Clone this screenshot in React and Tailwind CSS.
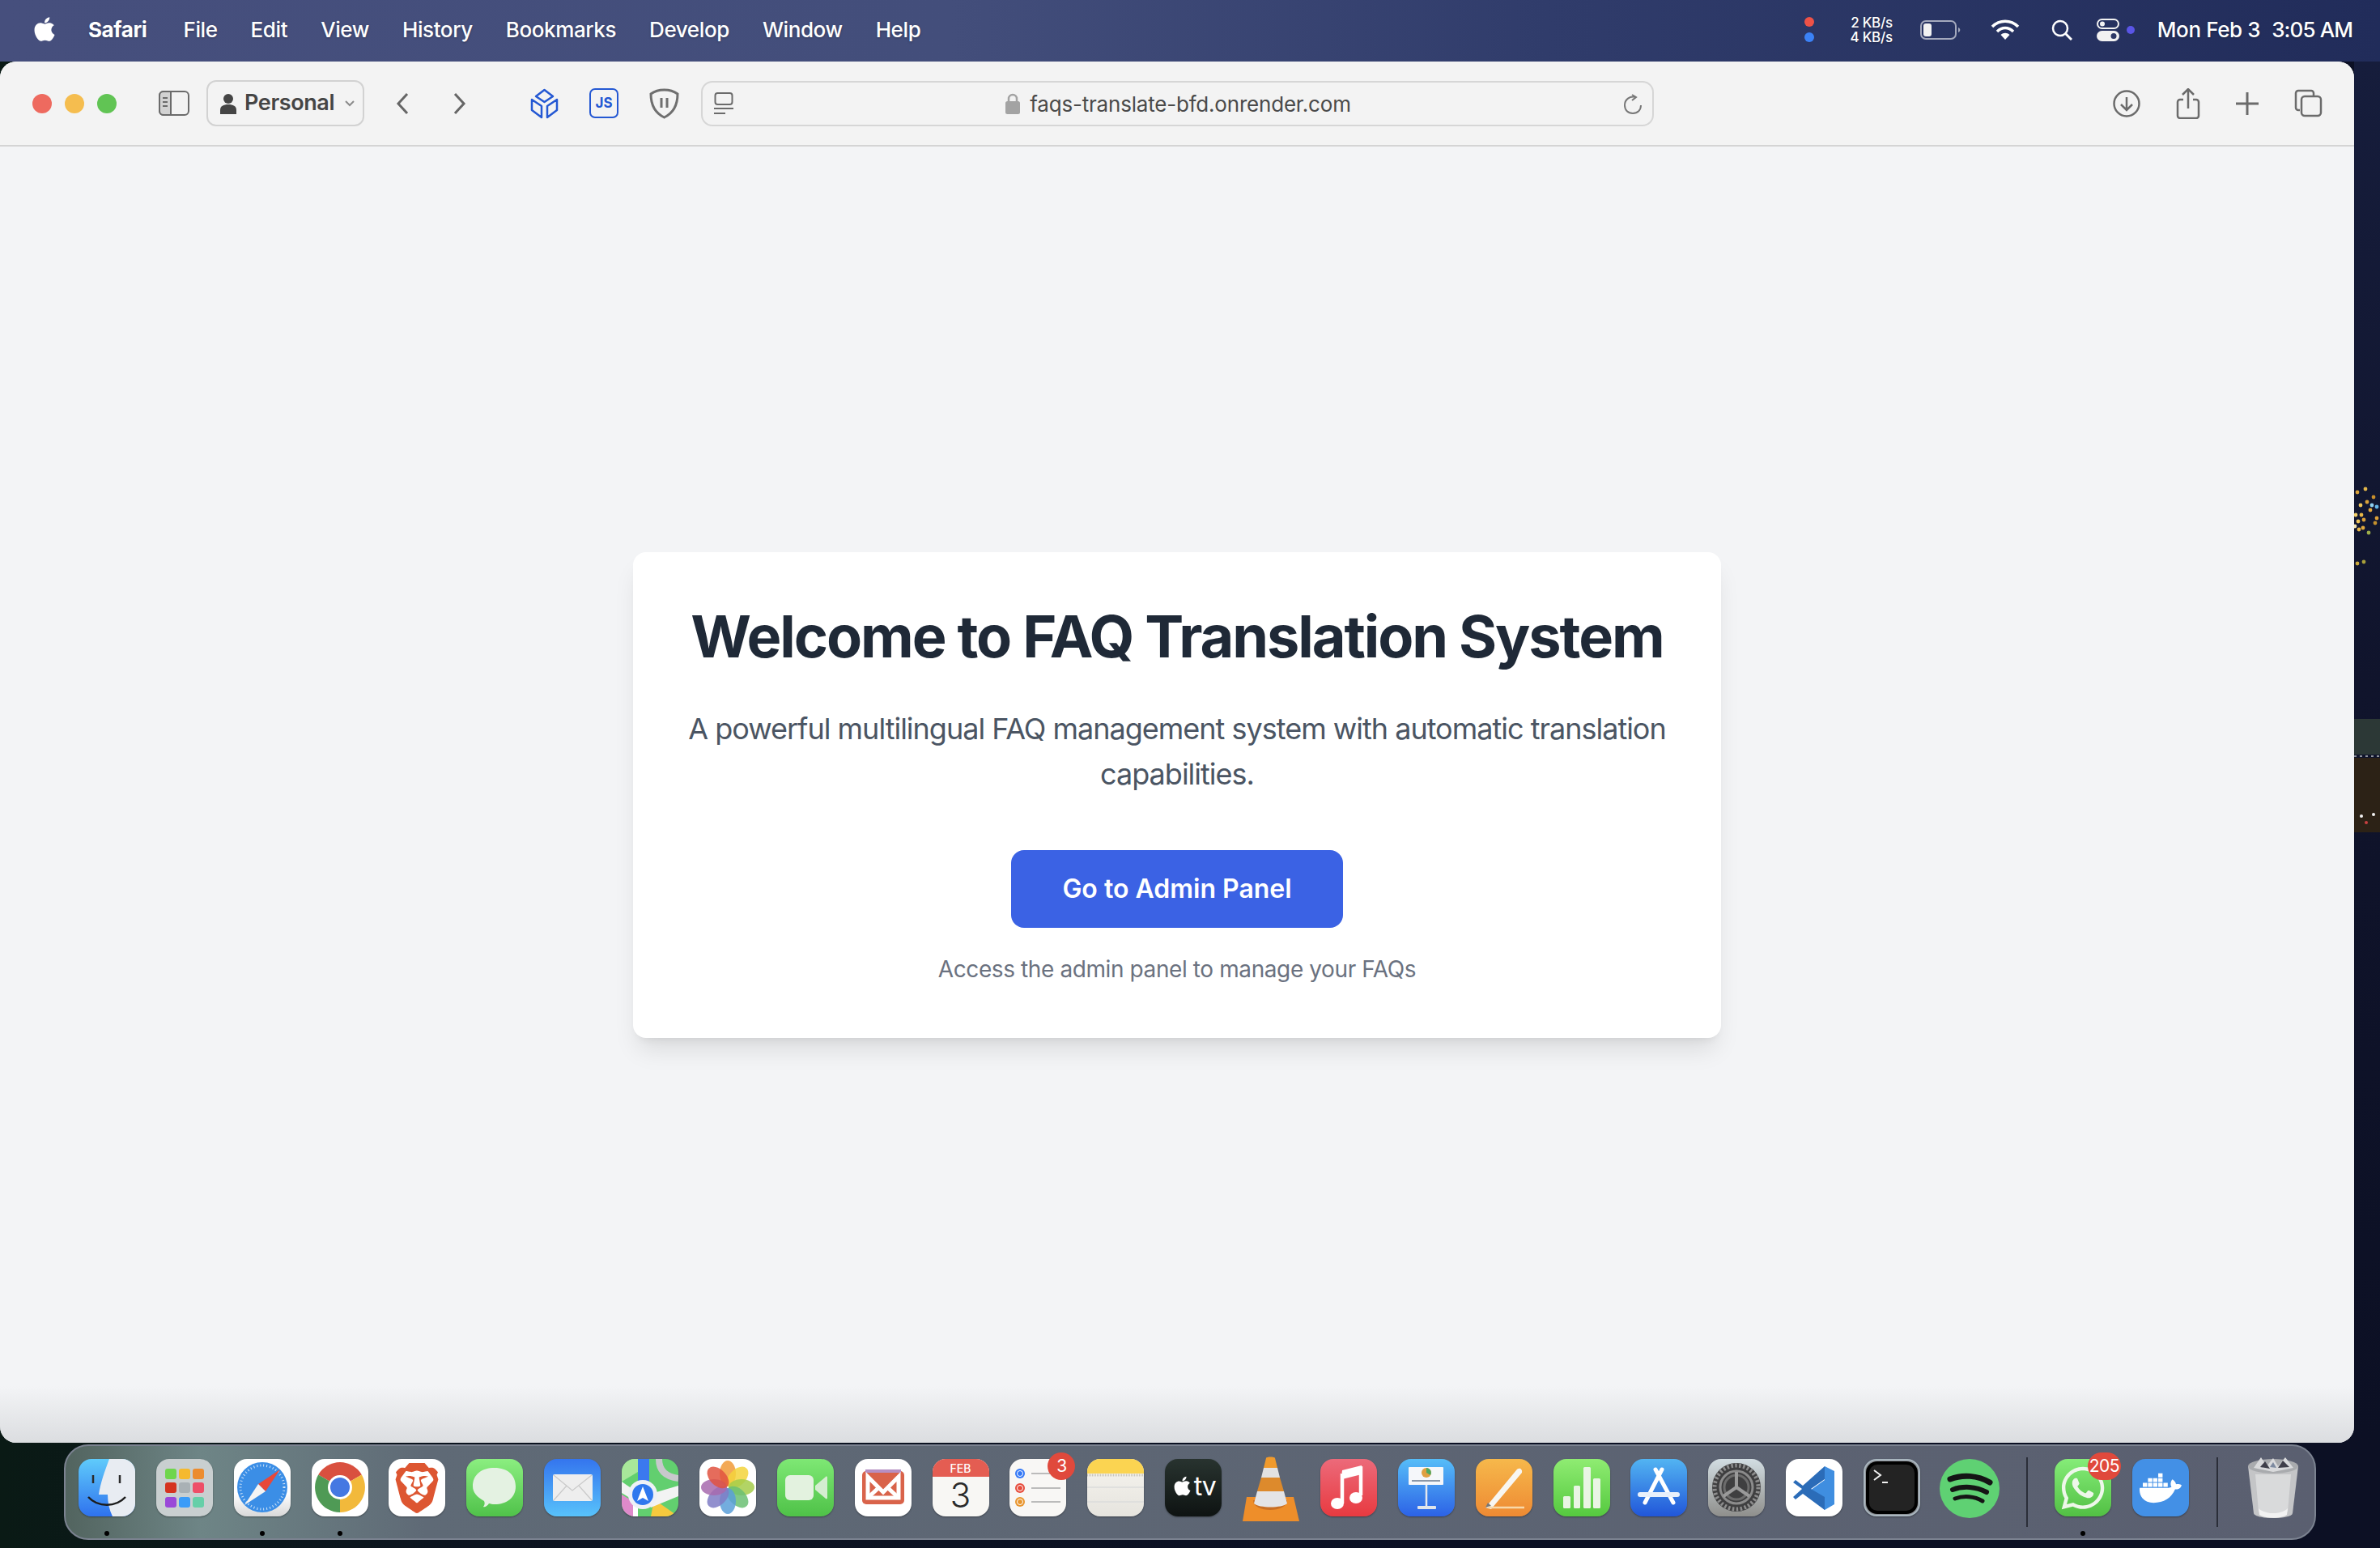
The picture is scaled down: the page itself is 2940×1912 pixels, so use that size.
import { FaApple, FaDocker, FaWhatsapp } from 'react-icons/fa'
import { SiBrave } from 'react-icons/si'

const MENUS = ['File', 'Edit', 'View', 'History', 'Bookmarks', 'Develop', 'Window', 'Help']

// warm city lights on the sliver of wallpaper right of the window
const LIGHTS = [
  [4, 12, '#d9a23a'], [14, 8, '#e2b64a'], [24, 18, '#c98f2c'], [8, 28, '#f0c659'], [20, 34, '#e2a93c'],
  [2, 40, '#f3d06a'], [12, 46, '#dba038'], [26, 50, '#c4902e'], [6, 58, '#e8b848'], [18, 62, '#9fb04a'],
  [1, 54, '#f5e6b0'], [28, 30, '#66b7e8'], [22, 28, '#8fd0f0'], [4, 100, '#c9a83c'], [12, 98, '#a8a03a'],
  [9, 40, '#e8b848'], [16, 24, '#d9a23a'], [5, 48, '#f0c659'], [11, 56, '#e2a93c'], [28, 44, '#dba038'],
]

function Icon({ w, h, box, children, className = '' }) {
  return (
    <svg width={w} height={h} viewBox={box || `0 0 ${w} ${h}`} fill="none" className={`shrink-0 ${className}`}>
      {children}
    </svg>
  )
}

function Tile({ className = '', children }) {
  return <div className={`relative w-[70px] h-[71px] rounded-[16px] overflow-hidden shadow-[0_1px_2px_rgba(0,0,0,0.35)] ${className}`}>{children}</div>
}

function Art({ children }) {
  return <svg width="70" height="71" viewBox="0 0 70 71" fill="none" className="absolute inset-0">{children}</svg>
}

function Badge({ children, className = '' }) {
  return (
    <div className={`absolute top-[-8px] h-[34px] rounded-full bg-[#e0493c] text-white text-[21px] tracking-[-0.5px] flex items-center justify-center ${className}`}>
      {children}
    </div>
  )
}

const PETALS = [
  [0, '#f19a38'], [45, '#f3d43c'], [90, '#a5cc4a'], [135, '#6bbf73'],
  [180, '#5a9fd8'], [225, '#7f7cc5'], [270, '#a76aae'], [315, '#e0523f'],
]

const dockApps = [
  {
    id: 'finder', dot: true,
    el: (
      <Tile className="bg-[linear-gradient(180deg,#5fcbfb,#2f72ee)]">
        <Art>
          <path d="M38 0C32 16 27 30 25 44H36C36 54 38 63 42 71H70V0Z" fill="#e8ecf2" />
          <path d="M18 20V30M51 20V30" stroke="#2b2b2b" strokeWidth="2.5" />
          <path d="M12 47C24 60 46 60 58 47" stroke="#1c1c1c" strokeWidth="2.5" />
        </Art>
      </Tile>
    ),
  },
  {
    id: 'launchpad',
    el: (
      <Tile className="bg-[#c9cfd0]">
        <Art>
          {[
            [11, 12, '#6fd64c'], [28, 12, '#f5b92e'], [45, 12, '#ec8c2e'],
            [11, 29, '#d5331f'], [28, 29, '#a9b1b5'], [45, 29, '#ee4f68'],
            [11, 47, '#9a48d8'], [28, 47, '#3a9cf8'], [45, 47, '#66cfa8'],
          ].map(([x, y, c]) => <rect key={`${x}${y}`} x={x} y={y} width="14" height="13" rx="3" fill={c} />)}
        </Art>
      </Tile>
    ),
  },
  {
    id: 'safari', dot: true,
    el: (
      <Tile className="bg-[linear-gradient(180deg,#ffffff_60%,#d8d8d8)]">
        <Art>
          <circle cx="35" cy="35" r="31" fill="#3b8ee6" />
          <circle cx="35" cy="35" r="27" stroke="#cfe4f8" strokeWidth="3" strokeDasharray="1 3" />
          <path d="M57 13L30 31L39 40Z" fill="#e8483a" />
          <path d="M13 57L30 31L39 40Z" fill="#f4f4f4" />
        </Art>
      </Tile>
    ),
  },
  {
    id: 'chrome', dot: true,
    el: (
      <Tile className="bg-white">
        <Art>
          <path d="M35 35L8.2 19.5A31 31 0 0 1 61.8 19.5Z" fill="#d9503f" />
          <path d="M35 35L61.8 19.5A31 31 0 0 1 35 66Z" fill="#f2b93b" />
          <path d="M35 35L35 66A31 31 0 0 1 8.2 19.5Z" fill="#4f9a55" />
          <circle cx="35" cy="35" r="15" fill="#fff" />
          <circle cx="35" cy="35" r="12" fill="#4478e2" />
        </Art>
      </Tile>
    ),
  },
  {
    id: 'brave',
    el: <Tile className="bg-white flex items-center justify-center"><SiBrave size={62} color="#dd5631" /></Tile>,
  },
  {
    id: 'messages',
    el: (
      <Tile className="bg-[linear-gradient(180deg,#8bee80,#50c24a)]">
        <Art>
          <path d="M8 34C8 19 19 11 35 11S61 20 61 34 50 56 35 56C32 56 30 55.500 28 55 26 58 23 60 21 59 23 57 23 54 22 52 13 47 8 41 8 34Z" fill="#e4f2e2" />
        </Art>
      </Tile>
    ),
  },
  {
    id: 'mail',
    el: (
      <Tile className="bg-[linear-gradient(180deg,#3475ee,#58c2fb)]">
        <Art>
          <rect x="11" y="19" width="49" height="33" rx="2" fill="#eeeeee" />
          <path d="M12 20L35 39L59 20M12 51L28 33M59 51L43 33" stroke="#c9c9c9" strokeWidth="1.2" />
        </Art>
      </Tile>
    ),
  },
  {
    id: 'maps',
    el: (
      <Tile className="bg-[#62cf6f]">
        <Art>
          <path d="M0 0H20V16L0 28Z" fill="#a8e79a" />
          <path d="M0 44L20 56V71H0Z" fill="#df8acb" />
          <path d="M40 50L70 71H36Z" fill="#f5c93e" />
          <path d="M26 46L70 33V46L36 60Z" fill="#f3f3f3" />
          <path d="M0 28L26 46L26 58L0 42Z" fill="#f3f3f3" />
          <path d="M46 0C46 14 54 22 70 24" stroke="#c8c8cc" strokeWidth="8" />
          <rect x="20" y="0" width="14" height="40" fill="#3b79ee" />
          <rect x="14" y="52" width="6" height="19" fill="#fff" />
          <circle cx="26" cy="44" r="18" fill="#eef1f6" />
          <circle cx="26" cy="44" r="13" fill="#2f78ee" />
          <path d="M26 34L33 52L26 48L19 52Z" fill="#fff" />
        </Art>
      </Tile>
    ),
  },
  {
    id: 'photos',
    el: (
      <Tile className="bg-white">
        <Art>
          {PETALS.map(([a, c]) => (
            <ellipse key={a} cx="35" cy="18" rx="10" ry="16" fill={c} opacity="0.85" transform={`rotate(${a} 35 35)`} />
          ))}
        </Art>
      </Tile>
    ),
  },
  {
    id: 'facetime',
    el: (
      <Tile className="bg-[linear-gradient(180deg,#7ee874,#4fc248)]">
        <Art>
          <rect x="10" y="20" width="35" height="31" rx="6" fill="#e3f2df" />
          <path d="M47 33L60 22C61 21 62 22 62 23V48C62 49 61 50 60 49L47 38Z" fill="#d5edd0" />
        </Art>
      </Tile>
    ),
  },
  {
    id: 'gmail',
    el: (
      <Tile className="bg-white">
        <Art>
          <rect x="9" y="15" width="52" height="41" rx="5" fill="#d9634a" />
          <path d="M13 15H57" stroke="#b68fc2" strokeWidth="4" />
          <path d="M16 22L35 41L54 22V48H16Z" stroke="#fff" strokeWidth="5" />
          <path d="M16 48L30 35M54 48L40 35" stroke="#fff" strokeWidth="5" />
        </Art>
      </Tile>
    ),
  },
  {
    id: 'calendar',
    el: (
      <Tile className="bg-[#f8f7f4] flex flex-col items-center">
        <div className="w-full h-[22px] bg-[#e45d52] text-white text-[14px] font-medium flex items-center justify-center">FEB</div>
        <div className="text-[#2a2a2a] text-[42px] font-light leading-[46px]">3</div>
      </Tile>
    ),
  },
  {
    id: 'reminders',
    badge: <Badge className="right-[-11px] w-[34px]">3</Badge>,
    el: (
      <Tile className="bg-[#f8f7f5]">
        <Art>
          {[[18, '#3478f6'], [36, '#e74c3c'], [53, '#e8952e']].map(([y, c]) => (
            <g key={y}>
              <circle cx="13" cy={y} r="6" fill={c} />
              <circle cx="13" cy={y} r="3.500" fill="none" stroke="#fff" strokeWidth="1" />
              <path d={`M27 ${y}H63`} stroke="#a7a7a7" strokeWidth="1.500" />
            </g>
          ))}
        </Art>
      </Tile>
    ),
  },
  {
    id: 'notes',
    el: (
      <Tile className="bg-[linear-gradient(180deg,#f6f4ef,#e6e4de)]">
        <Art>
          <rect width="70" height="18" fill="#fbd451" />
          <path d="M0 20H70" stroke="#c9c6bc" strokeWidth="3" strokeDasharray="1 1" />
          <path d="M0 35H70M0 53H70" stroke="#dcdcdc" strokeWidth="1.500" />
        </Art>
      </Tile>
    ),
  },
  {
    id: 'tv',
    el: (
      <Tile className="bg-[linear-gradient(180deg,#28332f,#0e1312)] flex items-center justify-center text-white">
        <FaApple size={27} className="-mt-1" />
        <span className="text-[32px] font-normal leading-none ml-[1px] -mt-1 tracking-[-1px]">tv</span>
      </Tile>
    ),
  },
  {
    id: 'vlc',
    el: (
      <svg width="72" height="80" viewBox="0 0 72 80" fill="none" className="-mt-[3px] mb-[-6px]">
        <path d="M6 50H64L71 80H1Z" fill="#ee8e2a" />
        <path d="M14 54C14 70 56 70 56 54Z" fill="#c96f24" />
        <path d="M30 2C30 0 41 0 41 2L44 14H27Z" fill="#f09a2c" />
        <path d="M27 14H44L47 26H24Z" fill="#e2e2e2" />
        <path d="M24 26H47L52 43H19Z" fill="#dd8a2c" />
        <path d="M19 43H52L56 58C50 64 21 64 15 58Z" fill="#e4e4e6" />
      </svg>
    ),
  },
  {
    id: 'music',
    el: (
      <Tile className="bg-[linear-gradient(180deg,#ec6a7a,#e83a40)]">
        <Art>
          <path d="M27 18L50 12V45" stroke="#fff" strokeWidth="4.500" />
          <path d="M27 18V55" stroke="#fff" strokeWidth="4.500" />
          <path d="M27 14L51 8V19L27 25Z" fill="#fff" />
          <ellipse cx="21" cy="55" rx="8" ry="7" fill="#fff" />
          <ellipse cx="44" cy="48" rx="8" ry="7" fill="#fff" />
        </Art>
      </Tile>
    ),
  },
  {
    id: 'keynote',
    el: (
      <Tile className="bg-[linear-gradient(180deg,#56bdf8,#2c62e6)]">
        <Art>
          <rect x="13" y="10" width="43" height="22" rx="1" fill="#f5f7fa" />
          <path d="M17 27H52" stroke="#8b98a8" strokeWidth="2" />
          <circle cx="35" cy="17" r="6" fill="#e0a040" />
          <path d="M35 17V11A6 6 0 0 1 40 20Z" fill="#4fa860" />
          <path d="M35 32V58" stroke="#e4e8ee" strokeWidth="2.500" />
          <rect x="24" y="58" width="23" height="4" rx="1" fill="#dfe4ea" />
        </Art>
      </Tile>
    ),
  },
  {
    id: 'pages',
    el: (
      <Tile className="bg-[linear-gradient(180deg,#f6b84b,#ee8a33)]">
        <Art>
          <path d="M12 60L50 14C53 10 58 12 57 17L19 62Z" fill="#f8f6f1" />
          <path d="M12 60L15 54L19 58Z" fill="#777" />
          <path d="M15 60H60" stroke="#f8d8a8" strokeWidth="2.500" />
        </Art>
      </Tile>
    ),
  },
  {
    id: 'numbers',
    el: (
      <Tile className="bg-[linear-gradient(180deg,#8fec72,#55c93f)]">
        <Art>
          <rect x="12" y="46" width="9" height="15" rx="1.500" fill="#e9f5e4" />
          <rect x="25" y="33" width="8" height="28" rx="1.500" fill="#e9f5e4" />
          <rect x="37" y="10" width="9" height="51" rx="1.500" fill="#e9f5e4" />
          <rect x="49" y="24" width="9" height="37" rx="1.500" fill="#e9f5e4" />
        </Art>
      </Tile>
    ),
  },
  {
    id: 'appstore',
    el: (
      <Tile className="bg-[linear-gradient(180deg,#52b4f2,#2156d9)]">
        <Art>
          <path d="M39 13L18 54M31 13L53 54" stroke="#fff" strokeWidth="5" strokeLinecap="round" />
          <path d="M12 44H58" stroke="#e8f0fb" strokeWidth="6" strokeLinecap="round" />
        </Art>
      </Tile>
    ),
  },
  {
    id: 'settings',
    el: (
      <Tile className="bg-[linear-gradient(180deg,#d2dde2,#8f8f8c)]">
        <Art>
          <circle cx="35" cy="35" r="30" fill="#3f3f40" />
          <circle cx="35" cy="35" r="27" stroke="#8d8d8d" strokeWidth="5" strokeDasharray="2.500 2.500" />
          <circle cx="35" cy="35" r="20" stroke="#8b8b8b" strokeWidth="3" />
          <circle cx="35" cy="35" r="15" stroke="#6c6c6c" strokeWidth="3" />
          <path d="M35 35V16M35 35L19 46M35 35L51 46" stroke="#9a9a9a" strokeWidth="4" />
        </Art>
      </Tile>
    ),
  },
  {
    id: 'vscode',
    el: (
      <Tile className="bg-white">
        <Art>
          <path d="M48 9L60 15V56L48 63L27 41L48 26Z" fill="#3f8ee0" />
          <path d="M48 9L21 33L12 26L9 29L20 37L9 47L12 50L21 43L48 63V47L31 37L48 25Z" fill="#2b6cb8" />
        </Art>
      </Tile>
    ),
  },
  {
    id: 'terminal',
    el: (
      <Tile className="bg-[#8d9196] border-2 border-[#a9b6bf]">
        <div className="absolute inset-[1px] rounded-[14px] bg-black" />
        <div className="absolute inset-[5px] rounded-[10px] bg-[#232323]" />
        <Art>
          <path d="M11 12L19 18L11 24M21 27H28" stroke="#f2f2f2" strokeWidth="2" />
        </Art>
      </Tile>
    ),
  },
  {
    id: 'spotify',
    el: (
      <svg width="74" height="73" viewBox="0 0 74 73" fill="none">
        <ellipse cx="37" cy="36.500" rx="37" ry="36.500" fill="#5fd173" />
        <path d="M13 25C28 19 47 20 62 29" stroke="#151515" strokeWidth="7" strokeLinecap="round" />
        <path d="M16 38C29 33 45 34 58 41" stroke="#151515" strokeWidth="6" strokeLinecap="round" />
        <path d="M19 49C30 45 43 46 53 52" stroke="#151515" strokeWidth="5" strokeLinecap="round" />
      </svg>
    ),
  },
]

const dockExtras = [
  {
    id: 'whatsapp', dot: true,
    badge: <Badge className="right-[-12px] w-[41px]">205</Badge>,
    el: <Tile className="bg-[linear-gradient(180deg,#85ec78,#52c044)] flex items-center justify-center"><FaWhatsapp size={60} color="#eef7ea" /></Tile>,
  },
  {
    id: 'docker',
    el: <Tile className="bg-[#4390e6] flex items-center justify-center"><FaDocker size={52} color="#fff" /></Tile>,
  },
]

function DockCell({ app, wide }) {
  return (
    <div className={`relative shrink-0 flex flex-col items-center ${wide ? 'w-[96px]' : 'w-[95.875px]'}`}>
      <div className="relative h-[71px] flex items-start justify-center">
        {app.el}
        {app.badge}
      </div>
      {app.dot && <div className="w-[6px] h-[6px] rounded-full bg-black mt-[18px]" />}
    </div>
  )
}

function Trash() {
  return (
    <svg width="64" height="80" viewBox="0 0 64 80" fill="none" className="-mt-[5px]">
      <path d="M1 14L8 72C9 80 55 80 56 72L63 14Z" fill="#c4c5c7" />
      <path d="M10 24L14 70C20 76 44 76 50 70L54 24Z" fill="#d9dadb" />
      <path d="M14 66C22 74 42 74 50 66L49 74C42 79 22 79 15 74Z" fill="#f2f2f2" />
      <ellipse cx="32" cy="14" rx="31" ry="9" fill="#a9abae" />
      <path d="M8 16L17 3L24 14L32 4L38 14L47 3L57 16L32 21Z" fill="#d9dadc" />
      <path d="M16 15L22 8L28 17ZM38 16L44 7L52 15Z" fill="#3f3f4a" />
      <path d="M28 15L32 9L36 16Z" fill="#7d8aa0" />
    </svg>
  )
}

function Dock() {
  return (
    <div className="ml-[79px] mt-[2px] w-[2782px] h-[118px] rounded-[30px] border-2 border-[#7b8290] pl-[3px] pt-[16px] flex items-start bg-[linear-gradient(90deg,#52645f_0%,#6e8586_6%,#5f6a76_16%,#5a5f70_100%)]">
      {dockApps.map(app => <DockCell key={app.id} app={app} />)}
      <div className="w-[2px] h-[86px] bg-[#2b2e39] ml-[22px] mr-[20px] -mt-[2px] shrink-0" />
      {dockExtras.map(app => <DockCell key={app.id} app={app} wide />)}
      <div className="w-[2px] h-[86px] bg-[#2b2e39] ml-[21px] mr-[20px] -mt-[2px] shrink-0" />
      <div className="w-[96px] shrink-0 flex justify-center"><Trash /></div>
    </div>
  )
}

function MenuBar() {
  return (
    <div className="h-[76px] pb-[3px] flex items-center text-white text-[26px] font-medium tracking-[-0.4px] shrink-0 bg-[linear-gradient(90deg,#464f7d_0%,#434e7b_40%,#303c6b_65%,#212c5a_100%)] [text-shadow:0_1px_3px_rgba(0,0,0,0.3)]">
      <FaApple size={34} className="ml-[38px] -mt-[2px]" />
      <span className="ml-[37px] font-bold">Safari</span>
      <div className="ml-[45px] flex gap-[41px]">
        {MENUS.map(m => <span key={m}>{m}</span>)}
      </div>

      <div className="ml-auto flex items-center pr-[34px]">
        <div className="flex flex-col gap-[7px]">
          <div className="w-[12px] h-[12px] rounded-full bg-[#ee5247]" />
          <div className="w-[12px] h-[12px] rounded-full bg-[#3b82f6]" />
        </div>
        <div className="ml-[43px] w-[54px] text-[17px] leading-[18px] text-right tracking-[-0.3px] whitespace-nowrap">
          <div>2 KB/s</div>
          <div>4 KB/s</div>
        </div>
        <Icon w={51} h={24} className="ml-[34px]">
          <rect x="1" y="1" width="43" height="22" rx="6" stroke="#a4a9bd" strokeWidth="2" />
          <rect x="4" y="4" width="10" height="16" rx="3" fill="#f2f2f2" />
          <path d="M47 9C50 10 50 14 47 15Z" fill="#a4a9bd" />
        </Icon>
        <Icon w={36} h={26} className="ml-[36px]">
          <path d="M2 9C11 0 25 0 34 9" stroke="#fff" strokeWidth="3.500" />
          <path d="M8 15C14 9 22 9 28 15" stroke="#fff" strokeWidth="3.500" />
          <path d="M12.500 19C16 16 20 16 23.500 19L18 25Z" fill="#fff" />
        </Icon>
        <Icon w={26} h={26} className="ml-[39px]">
          <circle cx="11" cy="11" r="9" stroke="#fff" strokeWidth="2.500" />
          <path d="M17.500 17.500L25 25" stroke="#fff" strokeWidth="3" />
        </Icon>
        <Icon w={28} h={28} className="ml-[30px]">
          <rect x="1" y="1" width="26" height="11" rx="5.500" stroke="#f2f2f2" strokeWidth="2" />
          <circle cx="7" cy="6.500" r="3" fill="#f2f2f2" />
          <rect y="15" width="28" height="13" rx="6.500" fill="#f2f2f2" />
          <circle cx="21" cy="21.500" r="3.500" fill="#2d3866" />
        </Icon>
        <div className="ml-[9px] w-[10px] h-[10px] rounded-full bg-[#5a55e6]" />
        <span className="ml-[28px]">Mon Feb 3</span>
        <span className="ml-[14px] tracking-[-0.9px]">3:05 AM</span>
      </div>
    </div>
  )
}

function Toolbar() {
  return (
    <div className="h-[105px] shrink-0 flex items-center pl-[40px] bg-[#f3f3f3] border-b-2 border-[#d4d4d4] text-[#4a4a4a]">
      <div className="flex gap-[16px]">
        <div className="w-[24px] h-[24px] rounded-full bg-[#ee6a5f]" />
        <div className="w-[24px] h-[24px] rounded-full bg-[#f5bd4f]" />
        <div className="w-[24px] h-[24px] rounded-full bg-[#61c454]" />
      </div>
      <Icon w={38} h={31} className="ml-[52px]">
        <rect x="1" y="1" width="36" height="29" rx="5" stroke="#6b6b6b" strokeWidth="2" />
        <path d="M1 6a5 5 0 0 1 5-5h9v29H6a5 5 0 0 1-5-5Z" fill="#d2d2d2" stroke="#6b6b6b" strokeWidth="2" />
        <path d="M5 9H11M5 14H11M5 19H11" stroke="#6b6b6b" strokeWidth="2" />
      </Icon>
      <div className="ml-[21px] w-[195px] h-[57px] rounded-[12px] border-2 border-[#d2d2d2] flex items-center pl-[14px] font-semibold text-[27px] tracking-[-0.4px] text-[#454545]">
        <Icon w={22} h={26}>
          <circle cx="11" cy="7" r="6" fill="#454545" />
          <path d="M1 26V21C1 16 5 14 11 14S21 16 21 21V26Z" fill="#454545" />
        </Icon>
        <span className="ml-[9px]">Personal</span>
        <Icon w={14} h={9} className="ml-[12px]">
          <path d="M2 2L7 7L12 2" stroke="#8b8b8b" strokeWidth="2" />
        </Icon>
      </div>
      <Icon w={16} h={28} className="ml-[39px]">
        <path d="M14 2L3 14L14 26" stroke="#666" strokeWidth="3" />
      </Icon>
      <Icon w={16} h={28} className="ml-[55px]">
        <path d="M2 2L13 14L2 26" stroke="#666" strokeWidth="3" />
      </Icon>
      <Icon w={37} h={38} className="ml-[78px]">
        <path d="M18.500 2L29 10L18.500 17L8 10Z" stroke="#2458d3" strokeWidth="2.500" strokeLinejoin="round" />
        <path d="M3 14L15 22V36L3 27ZM34 14L22 22V36L34 27Z" stroke="#2458d3" strokeWidth="2.500" strokeLinejoin="round" />
      </Icon>
      <div className="ml-[37px] w-[36px] h-[37px] rounded-[7px] border-2 border-[#2458d3] flex items-center justify-center text-[#2458d3] text-[17px] font-bold">JS</div>
      <Icon w={37} h={38} className="ml-[38px]">
        <path d="M18.500 2C25 2 31 4 35 7C35 20 31 30 18.500 36C6 30 2 20 2 7C6 4 12 2 18.500 2Z" stroke="#6f6f6f" strokeWidth="3" />
        <path d="M15 12V24M22 12V24" stroke="#6f6f6f" strokeWidth="3" />
      </Icon>
      <div className="ml-[27px] w-[1177px] h-[56px] rounded-[14px] border-2 border-[#d6d6d6] flex items-center justify-between pl-[14px] pr-[12px]">
        <Icon w={24} h={28}>
          <rect x="1.500" y="1" width="21" height="14" rx="3" stroke="#6b6b6b" strokeWidth="2" />
          <path d="M0 20H24" stroke="#6b6b6b" strokeWidth="2" />
          <path d="M0 26H14" stroke="#6b6b6b" strokeWidth="2" />
        </Icon>
        <div className="flex items-center text-[26px] tracking-[-0.2px] text-[#4a4a4a] mt-[1px]">
          <Icon w={18} h={26}>
            <path d="M4 11V7a5 5 0 0 1 10 0v4" stroke="#a3a3a3" strokeWidth="2.500" />
            <rect y="10" width="18" height="16" rx="2.500" fill="#a3a3a3" />
          </Icon>
          <span className="ml-[12px]">faqs-translate-bfd.onrender.com</span>
        </div>
        <Icon w={24} h={28}>
          <path d="M11 3L16 6L11 10" stroke="#777" strokeWidth="2" />
          <path d="M16 6C8 4 2 9 2 16C2 22 6 26 12 26C18 26 22 22 22 16" stroke="#777" strokeWidth="2" />
        </Icon>
      </div>
      <Icon w={34} h={34} className="ml-[567px]">
        <circle cx="17" cy="17" r="15.500" stroke="#6b6b6b" strokeWidth="2.500" />
        <path d="M17 9V24M10 18L17 25L24 18" stroke="#6b6b6b" strokeWidth="2.500" />
      </Icon>
      <Icon w={30} h={38} className="ml-[44px]">
        <path d="M9 14H5a3 3 0 0 0-3 3v17a3 3 0 0 0 3 3h20a3 3 0 0 0 3-3V17a3 3 0 0 0-3-3h-4" stroke="#6b6b6b" strokeWidth="2.500" />
        <path d="M15 25V2M8 8L15 1L22 8" stroke="#6b6b6b" strokeWidth="2.500" />
      </Icon>
      <Icon w={28} h={28} className="ml-[44px]">
        <path d="M14 0V28M0 14H28" stroke="#6b6b6b" strokeWidth="3" />
      </Icon>
      <Icon w={35} h={35} className="ml-[44px]">
        <path d="M7 26H5a3 3 0 0 1-3-3V5a3 3 0 0 1 3-3h16a3 3 0 0 1 3 3v3" stroke="#6b6b6b" strokeWidth="2.500" />
        <rect x="9" y="9" width="24" height="24" rx="4" stroke="#6b6b6b" strokeWidth="2.500" />
      </Icon>
    </div>
  )
}

export default function App() {
  return (
    <div className="w-[2940px] h-[1912px] overflow-hidden flex flex-col font-[family-name:Inter,sans-serif] bg-[linear-gradient(90deg,#0a1a15_0%,#0c1420_20%,#0b1024_60%,#0c1024_100%)]">
      <MenuBar />

      <div className="flex h-[1706px] shrink-0">
        {/* Safari window */}
        <div className="relative w-[2908px] shrink-0 rounded-[20px] overflow-hidden flex flex-col bg-[#f3f4f6]">
          <Toolbar />
          <div className="flex-1 flex items-center justify-center">
            <div className="w-[1344px] px-[64px] pt-[64px] pb-[61px] bg-white rounded-[16px] text-center shadow-[0_20px_30px_-6px_rgba(0,0,0,0.1),0_8px_12px_-8px_rgba(0,0,0,0.1)]">
              <h1 className="text-[72px] leading-[80px] font-bold tracking-[-2.07px] text-[#1f2937] mb-[46px]">Welcome to FAQ Translation System</h1>
              <p className="text-[36px] leading-[56px] tracking-[-1px] text-[#4b5563] mb-[66px]">
                A powerful multilingual FAQ management system with automatic translation capabilities.
              </p>
              <button className="w-[410px] h-[96px] rounded-[16px] bg-[#3b62e4] text-white text-[32px] font-semibold">Go to Admin Panel</button>
              <p className="mt-[27px] text-[28px] leading-[48px] tracking-[-0.4px] text-[#6b7280]">Access the admin panel to manage your FAQs</p>
            </div>
          </div>
          {/* dock reflection fading in at the bottom edge of the window */}
          <div className="absolute left-0 right-0 bottom-0 h-[70px] bg-[linear-gradient(180deg,rgba(220,222,224,0),#dbdde0)]" />
        </div>

        {/* wallpaper sliver */}
        <svg width="32" height="1706" viewBox="0 0 32 1706" className="shrink-0">
          <defs>
            <linearGradient id="wall" x1="0" y1="0" x2="0" y2="1">
              <stop offset="0" stopColor="#161d3c" />
              <stop offset="0.45" stopColor="#10142c" />
              <stop offset="1" stopColor="#0c1024" />
            </linearGradient>
          </defs>
          <rect width="32" height="1706" fill="url(#wall)" />
          <g transform="translate(0 520)">
            {LIGHTS.map(([x, y, c], i) => <circle key={i} cx={x} cy={y} r="2.400" fill={c} />)}
          </g>
          <rect y="812" width="32" height="44" fill="#2c3836" />
          <path d="M0 858H32" stroke="#8e939c" strokeWidth="2" strokeDasharray="3 4" />
          <rect y="860" width="32" height="92" fill="#2c2216" />
          <circle cx="9" cy="932" r="2" fill="#f2f2f2" />
          <circle cx="24" cy="930" r="2" fill="#f2f2f2" />
          <circle cx="15" cy="940" r="2" fill="#c84040" />
        </svg>
      </div>

      <Dock />
    </div>
  )
}
